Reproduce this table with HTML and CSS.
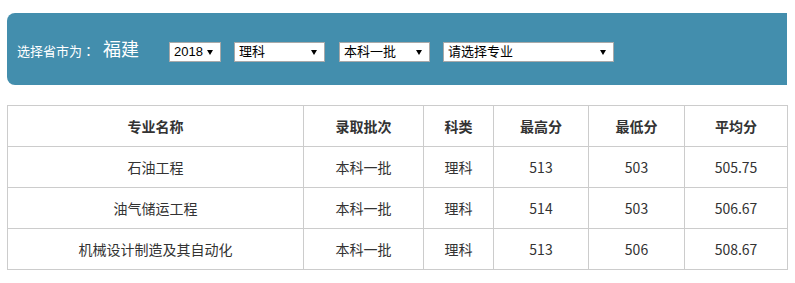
FILE: index.html
```html
<!DOCTYPE html>
<html lang="zh-CN">
<head>
<meta charset="utf-8">
<title>录取分数</title>
<link rel="stylesheet" href="styles.css">
</head>
<body>
<div class="page">
  <div class="filter">
    <span class="label">选择省市为<span class="colon" lang="ja">：</span></span>
    <span class="province">福建</span>
    <div class="selects">
      <div class="sel w-year"><select><option>2018</option></select><span class="arrow"></span></div>
      <div class="sel w-mid"><select><option>理科</option></select><span class="arrow"></span></div>
      <div class="sel w-mid"><select><option>本科一批</option></select><span class="arrow"></span></div>
      <div class="sel w-major"><select><option>请选择专业</option></select><span class="arrow"></span></div>
    </div>
  </div>
  <table class="scores">
    <colgroup>
      <col class="c1"><col class="c2"><col class="c3"><col class="c4"><col class="c5"><col class="c6">
    </colgroup>
    <thead>
      <tr><th>专业名称</th><th>录取批次</th><th>科类</th><th>最高分</th><th>最低分</th><th>平均分</th></tr>
    </thead>
    <tbody>
      <tr><td>石油工程</td><td>本科一批</td><td>理科</td><td>513</td><td>503</td><td>505.75</td></tr>
      <tr><td>油气储运工程</td><td>本科一批</td><td>理科</td><td>514</td><td>503</td><td>506.67</td></tr>
      <tr><td>机械设计制造及其自动化</td><td>本科一批</td><td>理科</td><td>513</td><td>506</td><td>508.67</td></tr>
    </tbody>
  </table>
</div>
</body>
</html>
```
FILE: styles.css
```css
html, body {
  margin: 0;
  padding: 0;
  background: #fff;
}
.page {
  padding: 13px 8px 0 7px;
  font-family: "Noto Sans CJK SC", "Microsoft YaHei", sans-serif;
  text-spacing-trim: space-all;
}
.filter {
  width: 780px;
  height: 72px;
  box-sizing: border-box;
  background: #438ead;
  border-radius: 8px 0 0 8px;
  display: flex;
  align-items: center;
  padding: 2px 0 0 10px;
  color: #fff;
}
.label {
  font-size: 13px;
  line-height: 20px;
  margin-top: 1px;
  white-space: nowrap;
}
.colon {
  font-family: "Noto Sans CJK JP", "Noto Sans CJK SC", sans-serif;
}
.province {
  font-size: 18px;
  line-height: 22px;
  margin-left: 8px;
  margin-top: -4px;
}
.selects {
  display: flex;
  gap: 13px;
  margin-left: 30px;
  margin-top: 3px;
}
.sel {
  position: relative;
  height: 20px;
}
.sel select {
  display: block;
  -webkit-appearance: none;
  appearance: none;
  width: 100%;
  height: 20px;
  box-sizing: border-box;
  border: 1px solid #a9a9a9;
  border-radius: 0;
  background: #fff;
  color: #000;
  font-family: "Liberation Sans", "Noto Sans CJK SC", sans-serif;
  font-size: 13px;
  padding: 0 0 0 4px;
  margin: 0;
  outline: none;
}
.arrow {
  position: absolute;
  right: 8px;
  top: 8px;
  width: 0;
  height: 0;
  border-left: 3px solid transparent;
  border-right: 3px solid transparent;
  border-top: 5px solid #000;
  pointer-events: none;
}
.w-year { width: 52px; }
.w-mid { width: 91px; }
.w-mid + .w-mid { margin-left: 1px; }
.w-major { width: 171px; }

.scores {
  margin-top: 20px;
  width: 780px;
  border-collapse: collapse;
  table-layout: fixed;
  color: #333;
  font-size: 14px;
}
.scores th, .scores td {
  border: 1px solid #cccccc;
  height: 40px;
  padding: 0;
  text-align: center;
  vertical-align: middle;
  line-height: 20px;
}
.scores th {
  font-weight: bold;
}
.scores td {
  font-weight: normal;
}
.c1 { width: 296px; }
.c2 { width: 120px; }
.c3 { width: 70px; }
.c4 { width: 95px; }
.c5 { width: 96px; }
.c6 { width: 103px; }
```
